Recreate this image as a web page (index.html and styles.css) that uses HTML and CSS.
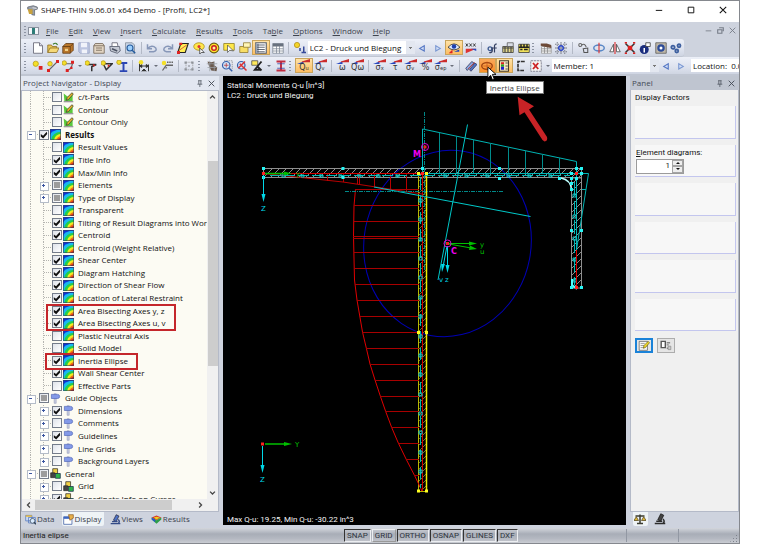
FILE: index.html
```html
<!DOCTYPE html>
<html lang="en">
<head>
<meta charset="utf-8">
<title>SHAPE-THIN</title>
<link rel="stylesheet" href="styles.css">
</head>
<body>
<svg class="defs" aria-hidden="true">
  <defs>
    <pattern id="hatch" width="7" height="7" patternUnits="userSpaceOnUse"><path d="M-1 8L8-1" stroke="#8c8c8c" stroke-width="1"/></pattern>
    <pattern id="hatchY" width="6" height="6" patternUnits="userSpaceOnUse"><path d="M-1 7L7-1" stroke="#77772a" stroke-width="1"/></pattern>
    <symbol id="i-app" viewBox="0 0 16 16"><path d="M1 3L9 1l6 2v3l-4 1v8l-4-1V7L1 6z" fill="#9aa0aa" stroke="#555c68"/><path d="M1 6h7v7H3z" fill="#c9a23d"/><path d="M8 4l6 1" stroke="#fff"/></symbol>
    <symbol id="i-doc" viewBox="0 0 16 16"><path d="M2 1h8l4 4v10H2z" fill="#fff" stroke="#556"/><path d="M10 1v4h4" fill="#dde" stroke="#556"/></symbol>
    <symbol id="i-open" viewBox="0 0 16 16"><path d="M1 14V4h5l1 2h6v3" fill="#e8c65a" stroke="#8a6a1a"/><path d="M1 14l3-6h12l-3 6z" fill="#f5d978" stroke="#8a6a1a"/><path d="M8 3q4-3 6 1" fill="none" stroke="#3a7a2a" stroke-width="1.5"/></symbol>
    <symbol id="i-box" viewBox="0 0 16 16"><path d="M5 2h10v9l-4 4H1V6z" fill="#b9772c" stroke="#5c3610"/><path d="M1 6h10v9M11 6l4-4" fill="none" stroke="#5c3610"/><path d="M4 9h4v3H4z" fill="#f1d28b"/></symbol>
    <symbol id="i-save" viewBox="0 0 16 16"><path d="M1 1h14v14H3l-2-2z" fill="#bcc5e0" stroke="#98a2c4"/><path d="M4 1h8v6H4zM5 10h7v5H5z" fill="#f1f3fa"/></symbol>
    <symbol id="i-card" viewBox="0 0 16 16"><path d="M1 5l2-3h10l2 3v10H1z" fill="#e2d5c3" stroke="#6b5c4c"/><path d="M1 5h14M4 8h8M4 11h8" stroke="#6b5c4c"/></symbol>
    <symbol id="i-print" viewBox="0 0 16 16"><path d="M4 6V1h7l1 5" fill="#fff" stroke="#556"/><path d="M1 6h13l1 6-4 3-9-3z" fill="#c4c9d4" stroke="#4c5364"/><path d="M4 9l7 3" stroke="#4c5364" stroke-width="2"/></symbol>
    <symbol id="i-preview" viewBox="0 0 16 16"><path d="M2 1h9l3 3v11H2z" fill="#c8d4e6" stroke="#7d8794"/><circle cx="8" cy="8" r="4" fill="#9cd0ff" stroke="#245a9c" stroke-width="1.5"/><path d="M11 11l4 4" stroke="#245a9c" stroke-width="2"/></symbol>
    <symbol id="i-undo" viewBox="0 0 16 16"><path d="M2 3v6h6M2 9q6-6 11-1 2 4-3 5H4" fill="none" stroke="#8797b8" stroke-width="2"/></symbol>
    <symbol id="i-redo" viewBox="0 0 16 16"><path d="M14 3v6H8M14 9Q8 3 3 8q-2 4 3 5h6" fill="none" stroke="#8797b8" stroke-width="2"/></symbol>
    <symbol id="i-para" viewBox="0 0 16 16"><path d="M5 2h10l-4 12H1z" fill="#ffee55" stroke="#222" stroke-width="1.5"/><path d="M3 11L13 4" stroke="#c33"/><path d="M3 1h4v3H3zM0 12h4v4H0z" fill="#d22"/></symbol>
    <symbol id="i-ell" viewBox="0 0 16 16"><ellipse cx="8" cy="6" rx="7" ry="5" fill="#ffe74d" stroke="#a88a10"/><circle cx="8" cy="6" r="2" fill="#d33"/><path d="M9 8l6 6h-4l-2 2z" fill="#fff" stroke="#333"/></symbol>
    <symbol id="i-ring" viewBox="0 0 16 16"><circle cx="8" cy="8" r="6.5" fill="#ffe52b" stroke="#6b5c10" stroke-width="1.4"/><circle cx="8" cy="8" r="3" fill="#fff4a0" stroke="#c22" stroke-width="2"/></symbol>
    <symbol id="i-sel" viewBox="0 0 16 16"><path d="M1 2h14v9H1z" fill="#ffe84a" stroke="#8a7a1c"/><path d="M6 4v10l3-3 5 1z" fill="#fff" stroke="#555"/></symbol>
    <symbol id="i-folder" viewBox="0 0 16 16"><path d="M1 6h5l1-2h5v10H1z" fill="#f8de66" stroke="#8d762b"/><path d="M6 1h9v6H6z" fill="#fff6b8" stroke="#8d762b"/></symbol>
    <symbol id="i-rows" viewBox="0 0 16 16"><path d="M1 1h14v14H1z" fill="#fff" stroke="#58606e" stroke-width="1.5"/><path d="M1 2h4v13H1z" fill="#9aa5b5"/><path d="M3 4h10M3 7h10M3 10h10M3 13h10" stroke="#333a48"/></symbol>
    <symbol id="i-table" viewBox="0 0 16 16"><path d="M1 2h14v13H1z" fill="#fff" stroke="#7c8594"/><path d="M1 2h14v4H1z" fill="#68717f"/><path d="M1 9h14M1 12h14M6 5v10M10 5v10" stroke="#7c8594"/></symbol>
    <symbol id="i-load" viewBox="0 0 16 16"><circle cx="4" cy="4" r="3.5" fill="#f4d52a" stroke="#b18c14"/><path d="M8 8v4M10 14h6M13 6v7" stroke="#35499a" stroke-width="2"/></symbol>
    <symbol id="i-prev" viewBox="0 0 16 16"><path d="M11 5v7L5 8.500z" fill="#d3dff5" stroke="#5577c4" stroke-width="1.5"/></symbol>
    <symbol id="i-next" viewBox="0 0 16 16"><path d="M5 5v7l6-3.500z" fill="#d3dff5" stroke="#7b98d2" stroke-width="1.5"/></symbol>
    <symbol id="i-eye" viewBox="0 0 16 16"><path d="M0 7q8-9 16 0-8 7-16 0z" fill="#dce8ff" stroke="#222"/><circle cx="8" cy="6" r="3" fill="#1d3fb0"/><path d="M1 15l5-5v5z" fill="#d22"/><path d="M8 13l7-3v3z" fill="#24b"/></symbol>
    <symbol id="i-xxx" viewBox="0 0 16 16"><path d="M1 2l3 4M4 2L1 6M6 2l3 4M9 2L6 6M11 2l3 4M14 2l-3 4" stroke="#333" stroke-width="1.2"/><path d="M1 9h14L1 15z" fill="#d33"/><path d="M8 9h7v3z" fill="#2a4bc0"/></symbol>
    <symbol id="i-gear" viewBox="0 0 16 16"><circle cx="4" cy="9" r="2.500" fill="none" stroke="#3f5c92" stroke-width="1.800"/><path d="M7 7v5q-1 3-4 2M10 14V5q1-3 3-2M8 8h5" fill="none" stroke="#333e60" stroke-width="1.6"/></symbol>
    <symbol id="i-film" viewBox="0 0 16 16"><path d="M1 6h14v8H1z" fill="#e4d98d" stroke="#333"/><path d="M1 8h14M4 6v8M8 6v8M12 6v8" stroke="#444" stroke-width="1.5"/><path d="M7 1h8v5H7z" fill="#d9dde6" stroke="#555"/></symbol>
    <symbol id="i-film2" viewBox="0 0 16 16"><path d="M1 3h14v11H1z" fill="#f0e15c" stroke="#333"/><path d="M1 7h14M4 3v4M8 3v4M12 3v4M3 10h3M8 10h5" stroke="#222" stroke-width="2"/></symbol>
    <symbol id="i-hand" viewBox="0 0 16 16"><path d="M2 6h13v9H2z" fill="#f3f3f3" stroke="#999"/><path d="M2 9h13M2 12h13M6 6v9M10 6v9" stroke="#888"/><path d="M1 2h8l6 2v4l-6-1-8-2z" fill="#6d4a38"/></symbol>
    <symbol id="i-grid" viewBox="0 0 16 16"><path d="M3 0v16M8 0v16M13 0v16M0 3h16M0 8h16M0 13h16" stroke="#555a66" stroke-dasharray="2 1.5"/><circle cx="8" cy="8" r="3" fill="none" stroke="#2944c4" stroke-width="2"/></symbol>
    <symbol id="i-link" viewBox="0 0 16 16"><circle cx="3" cy="4" r="2" fill="none" stroke="#666" stroke-width="1.400"/><path d="M5 4q4-3 6 3" fill="none" stroke="#666" stroke-width="1.4"/><path d="M7 9l6-1v6H8z" fill="none" stroke="#555" stroke-width="1.400"/></symbol>
    <symbol id="i-rot" viewBox="0 0 16 16"><ellipse cx="8" cy="8" rx="7" ry="4" fill="none" stroke="#5a88c6" stroke-width="2"/><path d="M8 1v14" stroke="#d33" stroke-width="1.5"/></symbol>
    <symbol id="i-mirror" viewBox="0 0 16 16"><path d="M6 3v10H1zM10 3v10h5z" fill="#fff" stroke="#444"/><path d="M8 0v16" stroke="#d33" stroke-width="1.5"/></symbol>
    <symbol id="i-cross" viewBox="0 0 16 16"><path d="M2 2l12 12M14 2L2 14" stroke="#333" stroke-width="2"/><path d="M5 5h6v6H5z" fill="#d22"/><path d="M1 1h3M12 1h3M1 15h3M12 15h3" stroke="#d22" stroke-width="2"/></symbol>
    <symbol id="i-info" viewBox="0 0 16 16"><circle cx="7" cy="10" r="6" fill="#1a2d7e"/><path d="M9 1h6v5H9z" fill="#fff" stroke="#333"/><path d="M7 8v6" stroke="#fff" stroke-width="2"/></symbol>
    <symbol id="i-safe" viewBox="0 0 16 16"><path d="M1 1h14v14H1z" fill="#c0b8a8" stroke="#555"/><circle cx="8" cy="8" r="5" fill="#2c4b98"/><circle cx="8" cy="8" r="2" fill="#fff"/></symbol>
    <symbol id="i-gears" viewBox="0 0 16 16"><g fill="none" stroke="#3d5f9f" stroke-width="2.4"><circle cx="4" cy="7" r="2.2"/><circle cx="12" cy="5" r="2"/><circle cx="9" cy="12" r="2"/></g></symbol>
    <symbol id="i-node" viewBox="0 0 16 16"><circle cx="5" cy="5" r="3.5" fill="#f4e02a" stroke="#b79a14"/><path d="M9 8h5v5H9z" fill="#d22"/></symbol>
    <symbol id="i-line" viewBox="0 0 16 16"><path d="M2 14L14 2" stroke="#666" stroke-width="1.5"/><circle cx="4" cy="5" r="3" fill="#f4e02a" stroke="#b79a14"/><path d="M12 0h4v4h-4zM0 12h4v4H0z" fill="#d22"/></symbol>
    <symbol id="i-poly" viewBox="0 0 16 16"><path d="M3 5h11l-2 6-5 3" fill="none" stroke="#666" stroke-width="1.5"/><circle cx="3" cy="4" r="3" fill="#f4e02a" stroke="#b79a14"/><path d="M12 1h4v4h-4zM5 12h4v4H5zM11 9h3v3h-3z" fill="#d22"/></symbol>
    <symbol id="i-tee" viewBox="0 0 16 16"><path d="M3 6h12l-6 3v6" fill="none" stroke="#333" stroke-width="2"/><circle cx="3" cy="4" r="3" fill="#f4e02a" stroke="#b79a14"/><path d="M11 5l3 2-3 2z" fill="#d22"/></symbol>
    <symbol id="i-flag" viewBox="0 0 16 16"><path d="M3 5h12l-8 8z" fill="#eee" stroke="#333" stroke-width="2"/><circle cx="3" cy="4" r="3" fill="#f4e02a" stroke="#b79a14"/><path d="M9 6l3 1-3 3z" fill="#d22"/></symbol>
    <symbol id="i-beam" viewBox="0 0 16 16"><path d="M5 4h10M5 15h10M10 4v11" stroke="#2a45b4" stroke-width="2.6"/><circle cx="4" cy="3" r="3" fill="#f4e02a" stroke="#b79a14"/></symbol>
    <symbol id="i-dim" viewBox="0 0 16 16"><path d="M2 3v12M14 6v9M2 8h12M2 8l3-2v4zM14 8l-3-2v4zM5 15l3-3 3 3" fill="#333" stroke="#333" stroke-width="1.3"/><circle cx="4" cy="3" r="3" fill="#f4e02a"/></symbol>
    <symbol id="i-note" viewBox="0 0 16 16"><path d="M2 14l5-7h9M8 3h2M11 3h2M14 3h2M8 10l-2 1" stroke="#666" stroke-width="1.7" fill="none"/><circle cx="4" cy="4" r="3" fill="#f4e02a"/></symbol>
    <symbol id="i-gray" viewBox="0 0 16 16"><path d="M4 3h9v10H4z" fill="none" stroke="#999" stroke-dasharray="2 1"/><path d="M2 2h3v3H2zM11 2h3v3h-3zM2 11h3v3H2zM11 11h3v3h-3zM7 7h2v2H7z" fill="#8e9299"/></symbol>
    <symbol id="i-mesh" viewBox="0 0 16 16"><path d="M2 2l5 1 4-1v5l4 3-1 5-7-1-3-6z" fill="#6b5a4f"/><path d="M1 5h14M2 10h12M5 1v14M11 2v13" stroke="#9ba0a6"/></symbol>
    <symbol id="i-zoom" viewBox="0 0 16 16"><path d="M4 1h11v11" fill="none" stroke="#888" stroke-dasharray="2 1"/><circle cx="7" cy="7" r="5" fill="#cfe2f7" stroke="#345da8" stroke-width="1.6"/><path d="M11 11l4 4" stroke="#345da8" stroke-width="2"/><path d="M4 7h6M7 4v6" stroke="#b33"/></symbol>
    <symbol id="i-zoomx" viewBox="0 0 16 16"><circle cx="7" cy="7" r="5" fill="#cfe2f7" stroke="#345da8" stroke-width="1.6"/><path d="M3 11L12 2M5 5l9 9" stroke="#d33" stroke-width="2"/></symbol>
    <symbol id="i-view" viewBox="0 0 16 16"><path d="M1 1h8v6H1z" fill="#ffe95a" stroke="#444"/><path d="M14 2L5 13h8M9 9l5 5" fill="none" stroke="#222" stroke-width="2.4"/></symbol>
    <symbol id="i-isec" viewBox="0 0 16 16"><path d="M2 2h12M2 14h12M8 2v12" stroke="#c22c40" stroke-width="2.6"/><path d="M3 5h10M3 11h10" stroke="#2c41a8"/></symbol>
    <symbol id="i-wedge" viewBox="0 0 16 6"><path d="M0 6h8V3z" fill="#2748c0"/><path d="M6 3L16 0v4H6z" fill="#cc2b2b"/></symbol>
    <symbol id="i-stripe" viewBox="0 0 16 16"><path d="M1 11L9 2l3 2-9 10z" fill="#8aa8e0" stroke="#335"/><path d="M6 13L13 4l3 2-8 9z" fill="#4f72c4" stroke="#335"/><path d="M4 12l9-9" stroke="#c33"/></symbol>
    <symbol id="i-inertia" viewBox="0 0 16 16"><ellipse cx="8" cy="8" rx="7" ry="4.5" fill="none" stroke="#9c4010" stroke-width="1.8"/><path d="M8 2v12M3 8h10" stroke="#c55a1a"/></symbol>
    <symbol id="i-legend" viewBox="0 0 16 16"><path d="M2 1h12v14H2z" fill="#f4e6c0" stroke="#443c2c" stroke-width="1.4"/><path d="M4 3h4v3H4z" fill="#d22"/><path d="M4 6h4v3H4z" fill="#2a2"/><path d="M4 9h4v4H4z" fill="#22c"/><path d="M10 4h3M10 8h3M10 12h3" stroke="#222"/></symbol>
    <symbol id="i-csec" viewBox="0 0 16 16"><path d="M13 2H4v12h9" fill="none" stroke="#333" stroke-width="2.2" stroke-dasharray="5 1"/></symbol>
    <symbol id="i-delx" viewBox="0 0 16 16"><path d="M1 1h14v14H1z" fill="#f4f4f4" stroke="#667" stroke-dasharray="3 1"/><path d="M4 4l7 8M11 4l-7 8" stroke="#c22" stroke-width="2.4"/></symbol>
    <symbol id="i-rain" viewBox="0 0 16 16"><path d="M0 0h16v16H0z" fill="#1030d8"/><path d="M0 16V9Q2 1 16 1v15z" fill="#18b8f0"/><path d="M2 16Q3 5 16 4v12z" fill="#25d048"/><path d="M6 16Q7 8 16 7v9z" fill="#f4ea20"/><path d="M9 16q1-5 7-6v6z" fill="#f07018"/><path d="M11 16q1-3 5-3v3z" fill="#d01818"/><path d="M.5.5h15v15H.5z" fill="none" stroke="#345"/></symbol>
    <symbol id="i-pencil" viewBox="0 0 16 16"><path d="M1 2l6 5 7-6v12H2z" fill="#59c93c"/><path d="M1 14h14" stroke="#999" stroke-width="2"/><path d="M5 12l1-4 7-7 2 2-7 8z" fill="#e8b32c" stroke="#333"/></symbol>
    <symbol id="i-sign" viewBox="0 0 16 16"><path d="M6 1h3v14H6z" fill="#c9cde0" stroke="#7780a8" stroke-width=".6"/><path d="M2 2h9q3 0 3 3t-3 3H2z" fill="#8399e8" stroke="#5268b8"/></symbol>
    <symbol id="i-cubes" viewBox="0 0 16 16"><path d="M4 1h7v7H4z" fill="#f0cf45" stroke="#222"/><path d="M1 7h6v7H1z" fill="#444" stroke="#222"/><path d="M8 8h7v7H8z" fill="#2fb34a" stroke="#124"/></symbol>
    <symbol id="i-data" viewBox="0 0 16 16"><path d="M1 2h9v8H1zM5 5h10v8H5z" fill="#cfe0fa" stroke="#466cb4"/><path d="M1 2h9v2H1z" fill="#e9b72f"/><circle cx="11" cy="10" r="3.5" fill="#d9ebff" stroke="#345"/><path d="M13 12l3 3" stroke="#345" stroke-width="2"/></symbol>
    <symbol id="i-disp" viewBox="0 0 16 16"><path d="M1 4h12v11H1z" fill="#fff" stroke="#2c4f9c"/><path d="M1 4h12v3H1z" fill="#3a66c2"/><path d="M8 1h7v5l-5 3z" fill="#e8b04a" stroke="#8a5a20"/></symbol>
    <symbol id="i-micro" viewBox="0 0 16 16"><path d="M9 1l4 2-4 8-4-2z" fill="#4f73c6" stroke="#223"/><path d="M1 14h14M3 11h8M12 8q3 3 0 6" fill="none" stroke="#334a86" stroke-width="2"/></symbol>
    <symbol id="i-res" viewBox="0 0 16 16"><path d="M1 5l7-3 7 3-7 4z" fill="#d32"/><path d="M1 5v3l7 6 7-6V5L8 9z" fill="#2e9e48"/><path d="M4 5l4-1 5 1-5 3z" fill="#e8d420"/><path d="M1 5v3l5 4V8z" fill="#2a58c8"/></symbol>
    <symbol id="i-scale" viewBox="0 0 16 16"><path d="M8 2v11M2 4h12M4 14h8" stroke="#3c3c30" stroke-width="2"/><path d="M0 10l3-5 3 5zM10 10l3-5 3 5z" fill="#e2b93a" stroke="#54461a"/></symbol>
    <symbol id="i-edit" viewBox="0 0 16 16"><path d="M1 2h12v13H1z" fill="#f7f7f7" stroke="#555"/><path d="M3 5h6M3 8h5M3 11h4" stroke="#777"/><path d="M7 12l1-4 6-6 2 2-6 7z" fill="#f2da2b" stroke="#665a10"/></symbol>
    <symbol id="i-page" viewBox="0 0 16 16"><path d="M1 2h6v9H1z" fill="#fff" stroke="#555" stroke-width="2"/><path d="M9 4h5M9 7h3M9 12h3" stroke="#888" stroke-width="2"/><path d="M11 9h4v5h-4z" fill="#ccc" stroke="#888"/></symbol>
    <symbol id="i-pin" viewBox="0 0 10 10"><path d="M3 1h5M4 1v5M7 1v5M2 6h7M5.500 6v4" fill="none" stroke="currentColor"/></symbol>
    <symbol id="i-x" viewBox="0 0 10 10"><path d="M1 1l8 8M9 1L1 9" stroke="currentColor" stroke-width="1.3"/></symbol>
    <symbol id="i-min" viewBox="0 0 10 10"><path d="M1 5.500h8" stroke="currentColor" stroke-width="1.200"/></symbol>
    <symbol id="i-max" viewBox="0 0 10 10"><path d="M1.500 1.500h7v7h-7z" fill="none" stroke="currentColor" stroke-width="1.200"/></symbol>
    <symbol id="i-restore" viewBox="0 0 10 10"><path d="M3 1h6v5M1 4h6v5H1z" fill="none" stroke="currentColor" stroke-width="1.600"/></symbol>
    <symbol id="i-chev" viewBox="0 0 10 10"><path d="M1.500 7L5 3.500 8.500 7" fill="none" stroke="#444" stroke-width="1.800"/></symbol>
  </defs>
</svg>

<div class="window">
  <header class="titlebar">
    <svg class="app-icon"><use href="#i-app"/></svg>
    <h1>SHAPE-THIN 9.06.01 x64 Demo - [Profil, LC2*]</h1>
    <button class="caption" aria-label="Minimize"><svg><use href="#i-min"/></svg></button>
    <button class="caption" aria-label="Maximize"><svg><use href="#i-max"/></svg></button>
    <button class="caption" aria-label="Close"><svg><use href="#i-x"/></svg></button>
  </header>

  <nav class="menubar">
    <span class="grip"></span>
    <span class="doc-icon"></span>
    <button><u>F</u>ile</button><button><u>E</u>dit</button><button><u>V</u>iew</button><button><u>I</u>nsert</button><button><u>C</u>alculate</button><button><u>R</u>esults</button><button><u>T</u>ools</button><button>Ta<u>b</u>le</button><button><u>O</u>ptions</button><button><u>W</u>indow</button><button><u>H</u>elp</button>
    <span class="mdi">
      <button aria-label="Minimize document"><svg><use href="#i-min"/></svg></button>
      <button aria-label="Restore document"><svg><use href="#i-restore"/></svg></button>
      <button aria-label="Close document"><svg><use href="#i-x"/></svg></button>
    </span>
  </nav>

  <div class="toolbar main-tools">
    <span class="grip"></span>
    <button aria-label="New"><svg><use href="#i-doc"/></svg></button>
    <button aria-label="Open"><svg><use href="#i-open"/></svg></button>
    <button aria-label="Block manager"><svg><use href="#i-box"/></svg></button>
    <button aria-label="Save"><svg><use href="#i-save"/></svg></button>
    <button aria-label="Project"><svg><use href="#i-card"/></svg></button>
    <button aria-label="Print"><svg><use href="#i-print"/></svg></button>
    <button aria-label="Print preview"><svg><use href="#i-preview"/></svg></button>
    <span class="sep"></span>
    <button aria-label="Undo"><svg><use href="#i-undo"/></svg></button>
    <button aria-label="Redo"><svg><use href="#i-redo"/></svg></button>
    <button aria-label="Work plane"><svg><use href="#i-para"/></svg></button>
    <button aria-label="Select by ellipse"><svg><use href="#i-ell"/></svg></button>
    <button aria-label="Select by ring"><svg><use href="#i-ring"/></svg></button>
    <button aria-label="Select"><svg><use href="#i-sel"/></svg></button>
    <button aria-label="Group"><svg><use href="#i-folder"/></svg></button>
    <button class="on" aria-label="Navigator"><svg><use href="#i-rows"/></svg></button>
    <button aria-label="Tables"><svg><use href="#i-table"/></svg></button>
    <span class="sep"></span>
    <button aria-label="Load cases"><svg><use href="#i-load"/></svg></button>
    <select class="combo" aria-label="Load case"><option>LC2 - Druck und Biegung</option></select>
    <button aria-label="Previous load case"><svg><use href="#i-prev"/></svg></button>
    <button aria-label="Next load case"><svg><use href="#i-next"/></svg></button>
    <button class="on" aria-label="Show results"><svg><use href="#i-eye"/></svg></button>
    <button aria-label="Show values"><svg><use href="#i-xxx"/></svg></button>
    <span class="sep"></span>
    <button aria-label="Calculate"><svg><use href="#i-gear"/></svg></button>
    <button aria-label="Animation"><svg><use href="#i-film"/></svg></button>
    <button aria-label="Units"><svg><use href="#i-film2"/></svg></button>
    <span class="grip"></span>
    <button aria-label="Edit grid"><svg><use href="#i-hand"/></svg></button>
    <button aria-label="Grid"><svg><use href="#i-grid"/></svg></button>
    <span class="sep"></span>
    <button aria-label="Move"><svg><use href="#i-link"/></svg></button>
    <button aria-label="Rotate"><svg><use href="#i-rot"/></svg></button>
    <button aria-label="Mirror"><svg><use href="#i-mirror"/></svg></button>
    <button aria-label="Scale"><svg><use href="#i-cross"/></svg></button>
    <button aria-label="Info"><svg><use href="#i-info"/></svg></button>
    <button aria-label="Material"><svg><use href="#i-safe"/></svg></button>
    <button aria-label="Settings"><svg><use href="#i-gears"/></svg></button>
  </div>

  <div class="toolbar result-tools">
    <span class="grip"></span>
    <button aria-label="New node"><svg><use href="#i-node"/></svg></button>
    <button aria-label="New line"><svg><use href="#i-line"/></svg></button>
    <button aria-label="New polyline"><svg><use href="#i-poly"/></svg></button><span class="drop"></span>
    <button aria-label="New element"><svg><use href="#i-tee"/></svg></button>
    <button aria-label="Connect element"><svg><use href="#i-flag"/></svg></button>
    <button aria-label="New section"><svg><use href="#i-beam"/></svg></button>
    <span class="sep"></span>
    <button aria-label="Dimension"><svg><use href="#i-dim"/></svg></button><span class="drop"></span>
    <button aria-label="Comment"><svg><use href="#i-note"/></svg></button>
    <span class="sep"></span>
    <button aria-label="Guidelines"><svg><use href="#i-gray"/></svg></button>
    <span class="grip"></span>
    <button aria-label="Mesh"><svg><use href="#i-mesh"/></svg></button>
    <button aria-label="Zoom window"><svg><use href="#i-zoom"/></svg></button>
    <button aria-label="Zoom all"><svg><use href="#i-zoomx"/></svg></button>
    <button aria-label="View"><svg><use href="#i-view"/></svg></button><span class="drop"></span>
    <button aria-label="Section"><svg><use href="#i-isec"/></svg></button>
    <span class="grip"></span>
    <button class="val on"><svg><use href="#i-wedge"/></svg>Qᵤ</button>
    <button class="val"><svg><use href="#i-wedge"/></svg>Qᵥ</button>
    <span class="sep"></span>
    <button class="val"><svg><use href="#i-wedge"/></svg>ω</button>
    <button class="val"><svg><use href="#i-wedge"/></svg>Qω</button>
    <span class="sep"></span>
    <button class="val"><svg><use href="#i-wedge"/></svg>σₓ</button>
    <button class="val"><svg><use href="#i-wedge"/></svg>τ</button>
    <button class="val"><svg><use href="#i-wedge"/></svg>σᵥ</button>
    <button class="val"><svg><use href="#i-wedge"/></svg>%</button>
    <button class="val"><svg><use href="#i-wedge"/></svg>σₑₚ</button><span class="drop"></span>
    <span class="sep"></span>
    <button aria-label="Hatching"><svg><use href="#i-stripe"/></svg></button>
    <button class="on hot" aria-label="Inertia Ellipse" aria-describedby="tip"><svg><use href="#i-inertia"/></svg>
      <svg class="cursor" viewBox="0 0 10 16"><path d="M1 1v12l3-3 2 5 2-1-2-5h4z" fill="#fff" stroke="#000"/></svg>
      <span class="tooltip" id="tip" role="tooltip">Inertia Ellipse</span>
    </button>
    <button class="on" aria-label="Legend"><svg><use href="#i-legend"/></svg></button>
    <button aria-label="C section"><svg><use href="#i-csec"/></svg></button>
    <button aria-label="Delete results"><svg><use href="#i-delx"/></svg></button><span class="drop"></span>
    <select class="combo" aria-label="Member"><option>Member: 1</option></select>
    <button aria-label="Previous member"><svg><use href="#i-prev"/></svg></button>
    <button aria-label="Next member"><svg><use href="#i-next"/></svg></button>
    <input class="location" aria-label="Location" value="Location:  0.000">
  </div>

  <main class="workspace">
    <aside class="navigator">
      <div class="dock-head"><h2>Project Navigator - Display</h2><button aria-label="Pin"><svg><use href="#i-pin"/></svg></button><button aria-label="Close navigator"><svg><use href="#i-x"/></svg></button></div>
      <div class="tree-frame">
        <div class="tree-view">
          <ul class="tree">
            <li><i></i><label><input type="checkbox"><svg><use href="#i-pencil"/></svg>c/t-Parts</label></li>
            <li><i></i><label><input type="checkbox"><svg><use href="#i-pencil"/></svg>Contour</label></li>
            <li><i></i><label><input type="checkbox"><svg><use href="#i-pencil"/></svg>Contour Only</label></li>
            <li class="root"><i class="minus"></i><label class="strong"><input type="checkbox" checked><svg><use href="#i-rain"/></svg>Results</label></li>
            <li><i></i><label><input type="checkbox"><svg><use href="#i-rain"/></svg>Result Values</label></li>
            <li><i></i><label><input type="checkbox" checked><svg><use href="#i-rain"/></svg>Title Info</label></li>
            <li><i></i><label><input type="checkbox" checked><svg><use href="#i-rain"/></svg>Max/Min Info</label></li>
            <li><i class="plus"></i><label><input type="checkbox" class="mixed"><svg><use href="#i-rain"/></svg>Elements</label></li>
            <li><i class="plus"></i><label><input type="checkbox" class="mixed"><svg><use href="#i-rain"/></svg>Type of Display</label></li>
            <li><i></i><label><input type="checkbox"><svg><use href="#i-rain"/></svg>Transparent</label></li>
            <li><i></i><label><input type="checkbox" checked><svg><use href="#i-rain"/></svg>Tilting of Result Diagrams into Wor</label></li>
            <li><i></i><label><input type="checkbox" checked><svg><use href="#i-rain"/></svg>Centroid</label></li>
            <li><i></i><label><input type="checkbox"><svg><use href="#i-rain"/></svg>Centroid (Weight Relative)</label></li>
            <li><i></i><label><input type="checkbox" checked><svg><use href="#i-rain"/></svg>Shear Center</label></li>
            <li><i></i><label><input type="checkbox" checked><svg><use href="#i-rain"/></svg>Diagram Hatching</label></li>
            <li><i></i><label><input type="checkbox" checked><svg><use href="#i-rain"/></svg>Direction of Shear Flow</label></li>
            <li><i></i><label><input type="checkbox" checked><svg><use href="#i-rain"/></svg>Location of Lateral Restraint</label></li>
            <li><i></i><label><input type="checkbox" checked><svg><use href="#i-rain"/></svg>Area Bisecting Axes y, z</label></li>
            <li><i></i><label><input type="checkbox" checked><svg><use href="#i-rain"/></svg>Area Bisecting Axes u, v</label></li>
            <li><i></i><label><input type="checkbox"><svg><use href="#i-rain"/></svg>Plastic Neutral Axis</label></li>
            <li><i></i><label><input type="checkbox"><svg><use href="#i-rain"/></svg>Solid Model</label></li>
            <li><i></i><label><input type="checkbox" checked><svg><use href="#i-rain"/></svg>Inertia Ellipse</label></li>
            <li><i></i><label><input type="checkbox" checked><svg><use href="#i-rain"/></svg>Wall Shear Center</label></li>
            <li><i></i><label><input type="checkbox"><svg><use href="#i-rain"/></svg>Effective Parts</label></li>
            <li class="root"><i class="minus"></i><label><input type="checkbox" class="mixed"><svg><use href="#i-sign"/></svg>Guide Objects</label></li>
            <li><i class="plus"></i><label><input type="checkbox" checked><svg><use href="#i-sign"/></svg>Dimensions</label></li>
            <li><i class="plus"></i><label><input type="checkbox"><svg><use href="#i-sign"/></svg>Comments</label></li>
            <li><i class="plus"></i><label><input type="checkbox" checked><svg><use href="#i-sign"/></svg>Guidelines</label></li>
            <li><i class="plus"></i><label><input type="checkbox"><svg><use href="#i-sign"/></svg>Line Grids</label></li>
            <li><i class="plus"></i><label><input type="checkbox"><svg><use href="#i-sign"/></svg>Background Layers</label></li>
            <li class="root"><i class="minus"></i><label><input type="checkbox" class="mixed"><svg><use href="#i-cubes"/></svg>General</label></li>
            <li><i class="plus"></i><label><input type="checkbox"><svg><use href="#i-cubes"/></svg>Grid</label></li>
            <li><i class="plus"></i><label><input type="checkbox" checked><svg><use href="#i-cubes"/></svg>Coordinate Info on Cursor</label></li>
          </ul>
          <span class="mark mark-axes"></span>
          <span class="mark mark-ellipse"></span>
        </div>
        <div class="vscroll"><svg><use href="#i-chev"/></svg><span class="track"><span class="thumb"></span></span><svg class="down"><use href="#i-chev"/></svg></div>
        <div class="hscroll"><svg class="left"><use href="#i-chev"/></svg><span class="thumb"></span><svg class="right"><use href="#i-chev"/></svg></div>
      </div>
      <div class="tabs">
        <button><svg><use href="#i-data"/></svg>Data</button><button class="current"><svg><use href="#i-disp"/></svg>Display</button><button><svg><use href="#i-micro"/></svg>Views</button><button><svg><use href="#i-res"/></svg>Results</button>
      </div>
    </aside>

    <section class="canvas">
      <svg viewBox="223 76 403 449" preserveAspectRatio="xMinYMin meet">
        <g fill="#f4f4f4" class="info">
          <text x="227" y="88">Statical Moments Q-u [in^3]</text>
          <text x="227" y="98">LC2 : Druck und Biegung</text>
          <text x="227" y="522">Max Q-u: 19.25, Min Q-u: -30.22 in^3</text>
        </g>
        <ellipse cx="447.500" cy="243.500" rx="83.500" ry="93.500" transform="rotate(10.600 447.500 243.500)" fill="none" stroke="#0000b4"/>
        <g fill="none" stroke="#8e8e8e">
          <rect x="263.500" y="168.500" width="318" height="9" fill="url(#hatch)"/>
          <rect x="571.500" y="178" width="10" height="110" fill="url(#hatch)"/>
          <path d="M561 178q10 2 10.500 12" stroke="#bff" stroke-width="1.500"/>
        </g>
        <rect x="418.500" y="173.500" width="8" height="318" fill="url(#hatchY)" stroke="#b8b800"/>
        <path d="M426.500 174v317" stroke="#f0f000" stroke-width="1.500"/>
        <g fill="none" stroke="#b80000">
          <path d="M264 173.500H422M422.500 174V491" stroke="#d00000"/>
          <path d="M264 173.500L315 179l28 3 79 12"/>
          <path d="M327.500 173v8M343.500 173v9M357.500 173v11M359.500 173v11M374.500 173v13M390.500 173v16M406.500 173v19"/>
          <path d="M355.500 189L354 206l-.5 30 1 44 2.500 20 5.500 32 3.800 16 3.700 16 5 16 5.300 16 5.400 15.500 6 16 6.600 15.500 8 16.500 8 15.500L422 491" stroke="#e00000"/>
          <path d="M355 189.500h64M354 205.500h65M354 221.500h65M353 236.500h66M353 238.500h66M354 252.500h65M354 268.500h65M355 284.500h64M357 300.500h62M360 316.500h59M362 332.500h57M366 348.500h53M370 364.500h49M375 380.500h44M380 396.500h39M386 411.500h33M392 427.500h27M398 443.500h21M406 459.500h13M414 475.500h5" stroke="#a80000"/>
        </g>
        <g fill="none" stroke="#00b4b4">
          <path d="M422.500 173V129L576.500 161.500V250"/>
          <path d="M439.500 133v41M456.500 136v38M473.500 140v34M490.500 143v31M508.500 147v27M525.500 151v23M542.500 154v20M559.500 158v16" stroke="#008c8c"/>
          <path d="M374 187L530.500 216.500M467.500 124.500L438 280" stroke="#00c8c8"/>
          <path d="M422 173.500H588.500L576.500 250M582 189.500h4"/>
          <path d="M270 175.500H570" stroke-dasharray="11 3"/>
          <path d="M420.500 178V488" stroke-dasharray="12 5"/>
          <path d="M574.500 182V285" stroke-dasharray="14 5"/>
          <path d="M424.500 112V270M345 191.500H503" stroke="#008888" stroke-dasharray="4 1 1 1"/>
          <path d="M282 174v3h3v-2h-3M301 174v3h3v-2h-3M320 174v3h3v-2h-3M339 174v3h3v-2h-3M358 174v3h3v-2h-3M377 174v3h3v-2h-3M396 174v3h3v-2h-3M444 174v3h3v-2h-3M465 174v3h3v-2h-3M486 174v3h3v-2h-3M507 174v3h3v-2h-3M528 174v3h3v-2h-3M549 174v3h3v-2h-3" stroke="#18c8c8"/>
          <path d="M419 199h3v3h-3zM419 218h3v3h-3zM419 238h3v3h-3zM419 257h3v3h-3zM419 276h3v3h-3zM419 296h3v3h-3zM419 315h3v3h-3zM419 335h3v3h-3zM419 354h3v3h-3zM419 373h3v3h-3zM419 393h3v3h-3zM419 412h3v3h-3zM419 431h3v3h-3zM419 451h3v3h-3zM419 470h3v3h-3zM573 194h3v3h-3zM573 215h3v3h-3zM573 237h3v3h-3zM573 258h3v3h-3zM573 279h3v3h-3z" stroke="#18c8c8"/>
          <path d="M572 279v6l5 4" stroke="#50ffff" stroke-width="2"/>
        </g>
        <path d="M576.500 250v38" stroke="#e00000"/>
        <path fill="#28f4f4" d="M262 167h3v3h-3zM262 176h3v3h-3zM341.500 167h3v3h-3zM341.500 176h3v3h-3zM421 167h3v3h-3zM498 167h3v3h-3zM498 177h3v3h-3zM570 172h3v3h-3zM575 167h3v3h-3zM580 167h3v3h-3zM580 172h3v3h-3zM558 177h3v3h-3zM570 177h3v3h-3zM575 177h3v3h-3zM570 182h3v3h-3zM570 188h3v3h-3zM570 229h3v3h-3zM580 229h3v3h-3zM570 286h3v3h-3zM580 286h3v3h-3z"/>
        <path fill="#ff2020" d="M575 172h3v3h-3zM575 286h3v3h-3zM421 172h3v3h-3zM262 172h3v3h-3zM261 442.500h3v3h-3z"/>
        <path fill="#ffff20" d="M417 172h3v3h-3zM425 172h3v3h-3zM417 331h3v3h-3zM425 331h3v3h-3zM417 489.500h3v3h-3zM425 489.500h3v3h-3z"/>
        <g stroke="#00c000" fill="#00c000">
          <path d="M265 173.500h20M265 444h20" stroke-width="1.500"/><path d="M284 171.500l8 2-8 2zM284 442l8 2-8 2z" stroke="none"/>
          <path d="M449 243.500h22M449 244l22 4"/><path d="M469 241.500l8 2-8 2zM470 245.500l7 3.500-8 1z" stroke="none"/>
        </g>
        <g stroke="#00d8e8" fill="#00d8e8">
          <path d="M263.500 175v20M262.500 446v21"/><path d="M261.500 194h4l-2 8zM260.500 465h4l-2 8z" stroke="none"/>
          <path d="M447.500 246v21M447 246l-4 21"/><path d="M445.500 265h4l-2 8zM441 264h4l-3 8z" stroke="none"/>
        </g>
        <g fill="none" stroke="#d800d8"><circle cx="447.500" cy="243.500" r="3.500"/><circle cx="425" cy="147" r="3.500"/></g>
        <path fill="#f02020" d="M446 242h3v3h-3zM423.500 145.500h3v3h-3z"/>
        <g class="axis">
          <g fill="#00c000"><text x="296" y="176">y</text><text x="295" y="447">Y</text><text x="480" y="247">y</text><text x="480" y="254">u</text></g>
          <g fill="#00d8e8"><text x="261" y="211">Z</text><text x="260" y="482">Z</text><text x="439" y="282">v</text><text x="445" y="282">z</text></g>
          <g fill="#f000f0" class="point"><text x="413" y="157">M</text><text x="451" y="254">C</text></g>
        </g>
        <path d="M517.700 96.700L534 106.300l-5 3.200L547 137q1 4-2.500 4.500l-2-1.500L524.500 112.300l-5 3z" fill="#c82326"/>
      </svg>
    </section>

    <aside class="panel">
      <div class="dock-head"><h2>Panel</h2><button aria-label="Pin panel"><svg><use href="#i-pin"/></svg></button><button aria-label="Close panel"><svg><use href="#i-x"/></svg></button></div>
      <div class="panel-body">
        <h3>Display Factors</h3>
        <div class="factors">
          <div></div>
          <div><label for="factor"><u>E</u>lement diagrams:</label><span class="spin"><input id="factor" type="text" value="1"><span class="steps"><button aria-label="Increase"><b class="up"></b></button><button aria-label="Decrease"><b class="dn"></b></button></span></span></div>
          <div></div><div></div><div></div><div></div>
        </div>
        <div class="panel-actions"><button class="focus" aria-label="Edit factors"><svg><use href="#i-edit"/></svg></button><button aria-label="Report"><svg><use href="#i-page"/></svg></button></div>
      </div>
      <div class="tabs"><button class="current" aria-label="Factors"><svg><use href="#i-scale"/></svg></button><button class="dark" aria-label="Filter"><svg><use href="#i-micro"/></svg></button></div>
    </aside>
  </main>

  <footer class="status">
    <span class="message">Inertia elipse</span>
    <button>SNAP</button><button class="raised">GRID</button><button>ORTHO</button><button>OSNAP</button><button>GLINES</button><button>DXF</button>
    <span class="cells"><i></i><i></i></span>
    <span class="resize"></span>
  </footer>
</div>
</body>
</html>
```
FILE: styles.css
```css
* { box-sizing: border-box; }

body {
  margin: 0;
  padding: 0 20px;
  background: #fff;
  color: #111;
  font: 8px/12px "Open Sans", sans-serif;
}

.defs { position: absolute; width: 0; height: 0; }

button {
  margin: 0;
  padding: 0;
  border: 0;
  background: none;
  color: inherit;
  font: inherit;
}

h1, h2, h3 { margin: 0; font: inherit; }

.window {
  display: flex;
  flex-direction: column;
  height: 100vh;
  border: 1px solid #85888e;
  background: #ced3de;
  overflow: hidden;
}

/* Title and menu */
.titlebar {
  display: flex;
  align-items: center;
  height: 21px;
  padding: 0 0 3px 6px;
  background: #fff;
}
.titlebar h1 { flex: 1; padding-left: 3px; white-space: nowrap; }
.app-icon { width: 11px; height: 11px; }
.caption { width: 32px; height: 18px; }
.caption svg { width: 8px; height: 8px; display: block; margin: auto; }

.menubar {
  display: flex;
  align-items: center;
  height: 17px;
  gap: 10px;
  color: #3f444e;
  padding-left: 2px;
}
.menubar > button { white-space: nowrap; }
.menubar .grip { margin-right: -12px; }
.doc-icon {
  width: 11px;
  height: 8px;
  margin-right: -3px;
  border: 1px solid #8a919d;
  background: linear-gradient(90deg, #f4f6fa 30%, #2e7d78 30% 65%, #f4f6fa 65%);
}
.mdi { display: flex; gap: 5px; margin-left: auto; padding-right: 3px; color: #777d88; }
.mdi svg { width: 7px; height: 7px; display: block; }

/* Toolbars */
.grip {
  flex: none;
  width: 7px;
  height: 11px;
  background: radial-gradient(circle, #8d94a3 1px, transparent 1px) 0 0 / 4px 3px repeat-y;
}
.toolbar {
  display: flex;
  align-items: center;
  height: 18px;
  padding-left: 2px;
  background: linear-gradient(#edf0f8, #dde2ee 60%, #cfd5e2);
  border-bottom: 1px solid #c0c6d2;
}
.main-tools { max-width: 663px; border-radius: 0 3px 3px 0; }
.result-tools { height: 19px; border-bottom-width: 2px; }
.toolbar button {
  flex: 1 1 0;
  height: 15px;
  min-width: 0;
  display: flex;
  align-items: center;
  justify-content: center;
  position: relative;
}
.toolbar button > svg { flex: none; width: 12px; height: 12px; }
.toolbar .on {
  background: linear-gradient(#ffe3a8, #fdbd62);
  border: 1px solid #c9a45c;
}
.toolbar .hot { background: linear-gradient(#f9a85a, #fb9029); }
.sep { flex: none; width: 7px; height: 12px; background: linear-gradient(90deg, transparent 3px, #b3b9c6 3px 4px, transparent 4px); }
.drop { flex: none; width: 8px; height: 15px; }
.drop::after {
  content: "";
  display: block;
  margin: 7px auto 0 2px;
  width: 0;
  border: 2px solid transparent;
  border-top-color: #6a6f7a;
}
.toolbar .val { flex-direction: column; font: 8px/8px "DejaVu Sans", sans-serif; color: #333; }
.toolbar .val > svg { width: 13px; height: 5px; }
.combo {
  flex: none;
  width: 107px;
  height: 13px;
  padding: 0 0 0 2px;
  border: 0;
  border-radius: 0;
  appearance: none;
  background:
    linear-gradient(#777, #777) calc(100% - 3px) 6px / 3px 1px no-repeat,
    linear-gradient(#777, #777) calc(100% - 4px) 7px / 1px 1px no-repeat,
    linear-gradient(#e3e7f0, #e3e7f0) 100% 0 / 9px 13px no-repeat,
    #fff;
  color: #111;
  font: inherit;
}
.location {
  flex: none;
  width: 48px;
  height: 13px;
  margin-left: 2px;
  padding: 0 0 0 2px;
  border: 0;
  background: #fff;
  color: #111;
  font: inherit;
}
.toolbar .cursor { position: absolute; left: 7px; top: 7px; width: 9px; height: 15px; z-index: 3; }
.tooltip {
  position: absolute;
  left: 6px;
  top: 22px;
  padding: 0 3px;
  border: 1px solid #777;
  background: #fff;
  color: #444;
  line-height: 11px;
  white-space: nowrap;
  z-index: 2;
}

/* Workspace */
.workspace {
  flex: 1;
  min-height: 0;
  display: grid;
  grid-template-columns: 202px 1fr 113px;
}
.navigator, .panel { display: flex; flex-direction: column; min-height: 0; }
.dock-head {
  display: flex;
  align-items: center;
  gap: 5px;
  flex: none;
  height: 14px;
  padding: 0 4px 0 2px;
  color: #444a55;
  background: #e2e7f1;
}
.dock-head h2 { flex: 1; }
.dock-head svg { width: 7px; height: 7px; display: block; }
.navigator { padding-right: 4px; }
.panel { padding-left: 4px; }

.tree-frame {
  flex: 1;
  min-height: 0;
  display: grid;
  grid-template: 1fr 12px / 1fr 11px;
  border: 1px solid #b4bac8;
  background: #fcfbf3;
}
.tree-view { position: relative; overflow: hidden; }
.tree {
  display: grid;
  grid-auto-rows: 1fr;
  height: 414px;
  margin: 0;
  padding: 0 0 0 3px;
  list-style: none;
}
.tree li {
  display: flex;
  align-items: center;
  min-height: 0;
  padding-left: 13px;
  background:
    repeating-linear-gradient(#b4b4b0 0 1px, transparent 1px 2px) 5px 0 / 1px 100% no-repeat,
    repeating-linear-gradient(#b4b4b0 0 1px, transparent 1px 2px) 18px 0 / 1px 100% no-repeat;
}
.tree .root {
  padding-left: 0;
  background: repeating-linear-gradient(#b4b4b0 0 1px, transparent 1px 2px) 5px 0 / 1px 100% no-repeat;
}
.tree i {
  flex: none;
  width: 14px;
  height: 7px;
  background: repeating-linear-gradient(90deg, #b4b4b0 0 1px, transparent 1px 2px) 6px 3px / 8px 1px no-repeat;
}
.tree .plus::before, .tree .minus::before {
  content: "";
  display: block;
  width: 7px;
  height: 7px;
  margin-left: 2px;
  border: 1px solid #b4bcc8;
  background: linear-gradient(#3a55a0, #3a55a0) 1px 2px / 3px 1px no-repeat, #fff;
}
.tree .plus::before {
  background: linear-gradient(#3a55a0, #3a55a0) 1px 2px / 3px 1px no-repeat, linear-gradient(#3a55a0, #3a55a0) 2px 1px / 1px 3px no-repeat, #fff;
}
.tree label { display: flex; align-items: center; white-space: nowrap; line-height: 12px; }
.tree svg { flex: none; width: 11px; height: 11px; margin: 0 4px 0 1px; }
.strong { font-weight: 700; }
.tree input {
  flex: none;
  appearance: none;
  width: 10px;
  height: 10px;
  margin: 0;
  border: 1px solid #747c8a;
  background: linear-gradient(135deg, #dfe3ea, #fff);
}
.tree input:checked::before {
  content: "";
  display: block;
  width: 8px;
  height: 8px;
  background: #111;
  clip-path: polygon(10% 40%, 38% 60%, 85% 10%, 90% 40%, 40% 95%, 10% 70%);
}
.tree .mixed::before {
  content: "";
  display: block;
  width: 6px;
  height: 6px;
  margin: 1px;
  background: #9c9c9c;
}
.mark { position: absolute; border: 2px solid #c4262b; }
.mark-axes { left: 24px; top: 213px; width: 130px; height: 27px; }
.mark-ellipse { left: 23px; top: 262px; width: 93px; height: 17px; }

.vscroll { display: flex; flex-direction: column; align-items: center; background: #f0f0f0; }
.vscroll svg, .hscroll svg { flex: none; width: 7px; height: 12px; }
.vscroll .track { flex: 1; width: 10px; padding-top: 58px; }
.vscroll .thumb { display: block; height: 205px; background: #cdcdcd; }
.down { transform: rotate(180deg); }
.hscroll { grid-column: 1 / -1; display: flex; align-items: center; gap: 3px; padding: 0 14px 0 3px; background: #f0f0f0; }
.hscroll .thumb { width: 137px; height: 10px; background: #cdcdcd; margin-right: auto; }
.left { transform: rotate(-90deg); }
.right { transform: rotate(90deg); }

.tabs { display: flex; flex: none; height: 16px; gap: 5px; padding-left: 3px; color: #3c424d; }
.tabs button { display: flex; align-items: center; gap: 1px; height: 14px; padding: 0 2px 0 1px; }
.tabs svg { width: 11px; height: 11px; }
.tabs .current { background: #eef3f6; border-radius: 0 0 2px 2px; }
.dark { filter: grayscale(1) brightness(0.6); }

.canvas { min-height: 0; margin-bottom: 3px; background: #000; }
.canvas svg { display: block; width: 100%; height: 100%; }
.info { font: 8px Roboto, sans-serif; }
.axis { font: 7px "DejaVu Sans", sans-serif; }
.point { font-weight: 700; font-size: 8px; }

/* Right panel */
.panel .dock-head { background: #bfc5d0; }
.panel-body {
  flex: 1;
  min-height: 0;
  padding: 2px 2px 0 4px;
  background: #f0f0f0;
  border: 1px solid #b4bac8;
  border-top: 0;
  font-family: Roboto, sans-serif;
}
.factors { display: grid; grid-template-rows: repeat(6, 1fr); gap: 6px; height: 225px; margin-top: 2px; }
.factors > div { padding: 2px 1px; background: #f7f7f7; border: 1px solid #c3c6ee; border-width: 0 1px 1px 0; }
.factors label { display: block; line-height: 12px; }
.spin { display: flex; width: 48px; height: 15px; border: 1px solid #9b9b9b; background: #fff; }
.spin input { flex: 1; min-width: 0; padding: 0 2px; border: 0; background: none; text-align: right; font: inherit; color: #222; }
.steps { display: flex; flex-direction: column; width: 11px; }
.steps button { flex: 1; display: flex; align-items: center; justify-content: center; border: 1px solid #a5a5a5; background: #eee; }
.up, .dn { width: 0; border: 2px solid transparent; border-top-width: 0; border-bottom-color: #111; }
.dn { transform: rotate(180deg); }
.panel-actions { display: flex; gap: 4px; margin-top: 7px; }
.panel-actions button { display: flex; align-items: center; justify-content: center; width: 18px; height: 15px; border: 1px solid #adadad; background: #e5e5e5; }
.panel-actions svg { width: 12px; height: 11px; }
.panel-actions .focus { border: 2px solid #1a82d8; }
.panel .tabs svg { width: 12px; height: 12px; }

/* Status bar */
.status {
  display: flex;
  align-items: stretch;
  flex: none;
  height: 15px;
  padding: 1px 0 1px 2px;
  background: linear-gradient(#d3d6dc, #a8adb7 40%, #b4b8c1 70%, #c9ccd2);
  color: #2f3540;
  font-family: Roboto, sans-serif;
}
.message { flex: none; width: 321px; line-height: 14px; color: #222; }
.status button { padding: 0 2px; margin-right: 1px; border: 1px solid #eceef1; border-top-color: #333; border-left-color: #333; line-height: 11px; }
.status .raised { border-color: #eceef1 #999 #999 #eceef1; }
.cells { flex: 1; display: flex; justify-content: flex-end; gap: 51px; padding-right: 50px; }
.cells i { width: 1px; background: #9298a3; }
.resize { width: 10px; background: radial-gradient(circle, #7d828c 1px, transparent 1px) 0 2px / 3px 3px; clip-path: polygon(100% 20%, 100% 100%, 10% 100%); }
```
